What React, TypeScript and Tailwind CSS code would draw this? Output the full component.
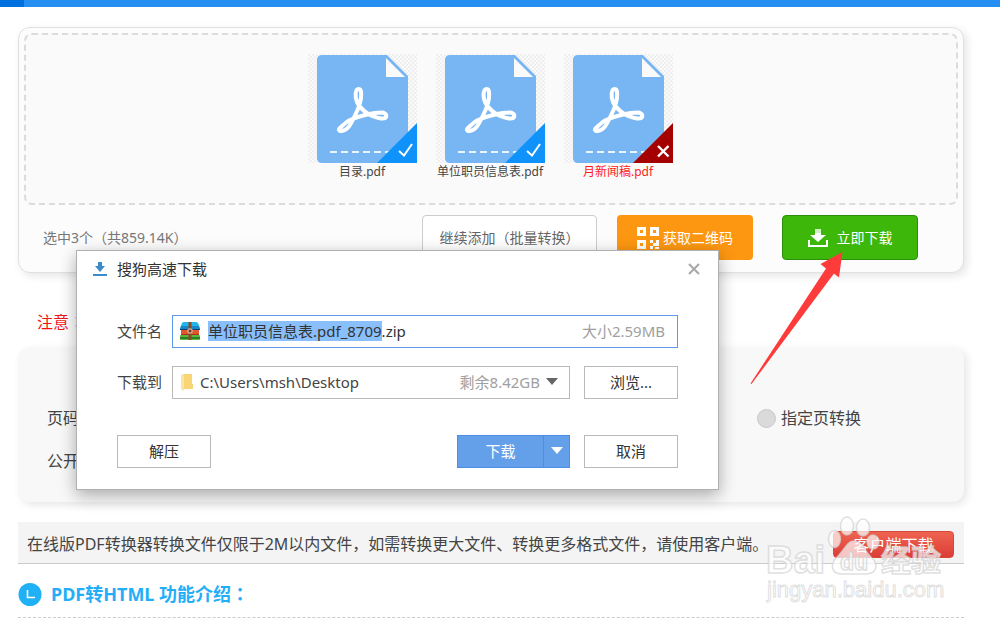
import React, {useEffect, useRef} from "react";

type PdfFile = {
    name: string;
    ok: boolean;
};

const files: PdfFile[] = [
    {name: "目录.pdf", ok: true},
    {name: "单位职员信息表.pdf", ok: true},
    {name: "月新闻稿.pdf", ok: false},
];

const zipBaseName = "单位职员信息表.pdf_8709";

// 居中显示的全角冒号
const Colon = () => <span className="font-['Noto_Sans_CJK_TC',sans-serif]">：</span>;

const PdfIcon: React.FC<{ ok: boolean }> = ({ok}) => (
    <svg viewBox="0 0 109 109" className="block size-[109px]" aria-hidden="true">
        <defs>
            <pattern id="checker" width="4" height="4" patternUnits="userSpaceOnUse">
                <rect width="2" height="2" fill="#efefef"/>
                <rect x="2" y="2" width="2" height="2" fill="#efefef"/>
            </pattern>
        </defs>
        <rect width="109" height="109" fill="url(#checker)"/>
        <path d="M14 1H79L100 22V109H14Q9 109 9 104V6Q9 1 14 1Z" fill="#78b6f3"/>
        <path d="M78 4V23H97Z" fill="#fafafa"/>
        <path
            d="M32 74C28 78 37 79 42 71C46 64 52 53 53 44C53.500 36 52.500 35 50.500 35C47.500 35 46.500 42 49 48C53 56 62 63 73 64.500C80 65 80 59 74 58.500C65 58.500 51 62 42 66C38 68 35 71 32 74Z"
            fill="none"
            stroke="#fff"
            strokeWidth="4"
            strokeLinejoin="round"
        />
        <path d="M22 98H82" stroke="#fff" strokeWidth="2" strokeDasharray="7 4" opacity=".85"/>
        <path d="M109 69V109H69Z" fill={ok ? "#0f93fb" : "#a50000"}/>
        {ok ? (
            <path d="M91 97L96 101.500L104 90" fill="none" stroke="#fff" strokeWidth="2"/>
        ) : (
            <path d="M94 92L104.500 102.500M104.500 92L94 102.500" stroke="#fff" strokeWidth="2.400"/>
        )}
    </svg>
);

const QrIcon = () => (
    <svg viewBox="0 0 22 22" className="size-[22px]" aria-hidden="true">
        <path
            fill="#fff"
            fillRule="evenodd"
            d="M0 0H9V9H0ZM3 3V6H6V3ZM13 0H22V9H13ZM16 3V6H19V3ZM0 13H9V22H0ZM3 16V19H6V16ZM13 13H16V16H13ZM19 13H22V19H16V16H19ZM13 19H16V22H13ZM18 20H22V22H18Z"
        />
    </svg>
);

const TrayDownloadIcon = () => (
    <svg viewBox="0 0 20 18" className="h-[18px] w-5" aria-hidden="true">
        <path d="M7 0H13V4H7Z" fill="#fff" opacity=".75"/>
        <path d="M7 4H13V6H18L10 13L2 6H7Z" fill="#fff"/>
        <path d="M1 11V17H19V11" fill="none" stroke="#fff" strokeWidth="2"/>
    </svg>
);

const ZipIcon = () => (
    <svg viewBox="0 0 20 18" className="h-[18px] w-5 shrink-0" aria-hidden="true">
        <path d="M4 0H16Q18 0 18.500 2L20 7H0L1.500 2Q2 0 4 0Z" fill="#20b6ea"/>
        <path d="M1 4H19L20 7H0Z" fill="#1787c6"/>
        <rect y="7" width="20" height="1" fill="#123f73"/>
        <rect x="1" y="8" width="18" height="5" fill="#e2552f"/>
        <rect x="1" y="12" width="18" height="1" fill="#a83518"/>
        <rect y="13" width="20" height="5" rx="1" fill="#5cb540"/>
        <rect y="15" width="20" height="2" fill="#2f7d25"/>
        <rect x="8.500" width="3" height="18" fill="#8a4b22"/>
        <rect x="8" y="7" width="4" height="4" rx="1" fill="#7a3418" stroke="#e8dcc8"/>
    </svg>
);

const FolderIcon = () => (
    <svg viewBox="0 0 13 18" className="h-[18px] w-[13px] shrink-0" aria-hidden="true">
        <path d="M3 1H12V11H13V16H3Z" fill="#f9d675"/>
        <path d="M1 1L4 3V18L1 16Z" fill="#fbe5a0"/>
    </svg>
);

const DownloadDialog = () => {
    const nameRef = useRef<HTMLInputElement>(null);

    // 默认选中文件名，不含扩展名
    useEffect(() => {
        nameRef.current?.focus();
        nameRef.current?.setSelectionRange(0, zipBaseName.length);
    }, []);

    const plainButton = "h-[33px] w-[94px] border border-[#b9b9b9] bg-white pb-[2px] text-[15px] text-[#333]";

    return (
        <div
            role="dialog"
            aria-labelledby="dialog-title"
            className="absolute top-[250px] left-[76px] w-[643px] border border-[#b0b0b0] bg-white text-[15px] text-[#444] shadow-[0_5px_16px_rgba(0,0,0,0.32)]"
        >
            <div className="flex h-9 items-center gap-[10px] pr-[18px] pl-4">
                <svg viewBox="0 0 14 14" className="size-[14px]" aria-hidden="true">
                    <path d="M5 0H9V4H12L7 10L2 4H5ZM0 12H14V14H0Z" fill="#3c8bcb"/>
                </svg>
                <h2 id="dialog-title" className="flex-1 text-[#333]">搜狗高速下载</h2>
                <button aria-label="关闭">
                    <svg viewBox="0 0 12 12" className="size-3">
                        <path d="M1 1L11 11M11 1L1 11" stroke="#aaa" strokeWidth="2.200"/>
                    </svg>
                </button>
            </div>

            <div className="px-10 pt-7 pb-[21px]">
                <div className="flex items-center">
                    <label htmlFor="file-name" className="w-[55px] pb-[2px]">文件名</label>
                    <div className="flex h-[33px] flex-1 items-center border border-[#5b9bea] pr-3 pb-[2px] pl-[7px]">
                        <ZipIcon/>
                        <input
                            id="file-name"
                            ref={nameRef}
                            defaultValue={`${zipBaseName}.zip`}
                            className="ml-2 h-5 min-w-0 flex-1 leading-5 text-[#333] caret-transparent outline-none selection:bg-[#89bffb] selection:text-[#333]"
                        />
                        <span className="text-[#a0a0a0]">大小2.59MB</span>
                    </div>
                </div>

                <div className="mt-[18px] flex items-center">
                    <label htmlFor="save-path" className="w-[55px] pb-[2px]">下载到</label>
                    <div className="flex h-[33px] flex-1 items-center border border-[#b9b9b9] pr-[11px] pb-[2px] pl-[7px]">
                        <FolderIcon/>
                        <select id="save-path" className="ml-[7px] min-w-0 flex-1 appearance-none bg-transparent outline-none">
                            <option>C:\Users\msh\Desktop</option>
                        </select>
                        <span className="mr-[6px] text-[#a0a0a0]">剩余8.42GB</span>
                        <svg viewBox="0 0 12 7" className="h-[7px] w-3" aria-hidden="true">
                            <path d="M0 0H12L6 7Z" fill="#666"/>
                        </svg>
                    </div>
                    <button className={`ml-[14px] ${plainButton}`}>浏览...</button>
                </div>

                <div className="mt-9 flex">
                    <button className={`mr-auto ${plainButton}`}>解压</button>
                    <button className="h-[33px] w-[87px] border border-[#4a8ee6] bg-[#64a0ea] pb-[2px] text-[15px] text-white">
                        下载
                    </button>
                    <button
                        aria-label="更多下载方式"
                        className="flex h-[33px] w-[26px] items-center justify-center border border-l-0 border-[#4a8ee6] bg-[#64a0ea] pb-[2px]"
                    >
                        <svg viewBox="0 0 12 7" className="h-[7px] w-3">
                            <path d="M0 0H12L6 7Z" fill="#fff"/>
                        </svg>
                    </button>
                    <button className={`ml-[14px] ${plainButton}`}>取消</button>
                </div>
            </div>
        </div>
    );
};

const Arrow = () => (
    <svg viewBox="0 0 94 134" className="pointer-events-none absolute top-[251px] right-[156px] h-[134px] w-[94px]" aria-hidden="true">
        <path d="M92.500 1L70.500 13L76 17.500L.500 132.500L1.500 133L84 22.500L89 26.500Z" fill="#fd3b3b"/>
    </svg>
);

const Watermark = () => (
    <svg
        viewBox="0 0 260 124"
        className="pointer-events-none absolute top-[500px] right-0 h-[124px] w-[260px] font-['Liberation_Sans','Noto_Sans_CJK_SC',sans-serif]"
        aria-hidden="true"
    >
        <g fill="#fff" fillOpacity=".7" stroke="#d2d2d2" strokeOpacity=".7" strokeWidth="1.500">
            <ellipse cx="94.500" cy="39" rx="6" ry="8.500"/>
            <ellipse cx="107" cy="26" rx="6.500" ry="9"/>
            <ellipse cx="123" cy="27.500" rx="6.500" ry="8.500"/>
            <ellipse cx="133" cy="42" rx="6" ry="7"/>
            <path d="M114 41C107 41 105 49 98 56C90 63 90 74 102 74H127C138 73 138 63 131 57C124 50 122 41 114 41Z"/>
            <text x="26" y="73" fontSize="38" fontWeight="700">Bai</text>
            <text x="100" y="70" fontSize="23" fontWeight="700">du</text>
            <text x="141" y="71" fontSize="30" fontWeight="700">经验</text>
            <text x="27" y="97" fontSize="22" strokeWidth="1">jingyan.baidu.com</text>
        </g>
    </svg>
);

const App: React.FC = () => {
    return (
        <div className="relative overflow-hidden bg-white font-['Noto_Sans','Noto_Sans_CJK_SC',sans-serif] text-base leading-6 text-[#444]">
            <div className="flex h-[7px] bg-[#2590f1]">
                <div className="w-6 bg-[#0070de]"/>
            </div>

            <main className="pt-5 pr-9 pl-[18px]">
                <section className="rounded-xl border border-[#e0e0e0] bg-[#fcfcfc] px-[5px] pt-[5px] pb-3 shadow-[3px_3px_8px_rgba(0,0,0,0.1)]">
                    <ul className="flex justify-center gap-[19px] rounded-lg border-2 border-dashed border-[#dcdcdc] bg-[#fafafa] pt-[19px] pr-[2px] pb-[23px]">
                        {files.map((file) => (
                            <li key={file.name} className="w-[109px]">
                                <PdfIcon ok={file.ok}/>
                                <p className={`text-center text-xs leading-[17px] whitespace-nowrap ${file.ok ? "text-[#444]" : "text-[#ff1a1a]"}`}>
                                    {file.name}
                                </p>
                            </li>
                        ))}
                    </ul>

                    <div className="mt-[10px] flex items-center pr-10 pl-[19px] text-sm">
                        <p className="mr-auto text-[#777]">选中3个（共859.14K）</p>
                        <button className="h-[45px] w-[175px] rounded border border-[#ccc] bg-white text-[#666]">
                            继续添加（批量转换）
                        </button>
                        <button className="ml-5 flex h-[45px] w-[136px] items-center justify-center gap-1 rounded bg-[#fd9711] text-white">
                            <QrIcon/>
                            获取二维码
                        </button>
                        <button className="ml-[29px] flex h-[45px] w-[136px] items-center justify-center gap-[9px] rounded border border-[#2d8e0c] bg-[#3cb70a] text-white">
                            <TrayDownloadIcon/>
                            立即下载
                        </button>
                    </div>
                </section>

                <p className="mt-9 pl-[19px] text-[#f01414]">注意<Colon/></p>

                <section className="mt-[13px] rounded-xl bg-[#f8f8f8] pt-[59px] pr-[103px] pb-[29px] pl-[29px] shadow-[3px_3px_8px_rgba(0,0,0,0.1)]">
                    <div className="flex justify-between">
                        <span>页码</span>
                        <label className="flex items-center gap-[5px]">
                            <input type="radio" name="pages" className="size-[19px] appearance-none rounded-full border border-[#c8c8c8] bg-[#dadada]"/>
                            指定页转换
                        </label>
                    </div>
                    <p className="mt-[19px]">公开</p>
                </section>

                <div className="mt-5 flex h-[42px] items-center justify-between border-b border-[#ccc] bg-[#f4f4f4] pt-[2px] pr-[10px] pl-[9px]">
                    <p className="whitespace-nowrap">在线版PDF转换器转换文件仅限于2M以内文件，如需转换更大文件、转换更多格式文件，请使用客户端。</p>
                    <button className="mt-[2px] h-[27px] w-[121px] shrink-0 rounded-sm border border-[#d8483a] bg-linear-to-b from-[#ee6350] to-[#dc3c37] leading-6 text-white">
                        客户端下载
                    </button>
                </div>

                <div className="mt-[15px] flex items-center gap-[9px] border-b border-dashed border-[#ccc] pb-[9px]">
                    <svg viewBox="0 0 24 24" className="size-6" aria-hidden="true">
                        <circle cx="12" cy="12.500" r="11.500" fill="#1fb0f6"/>
                        <path d="M9.500 8V15.500H17" fill="none" stroke="#fff" strokeWidth="1.600"/>
                    </svg>
                    <h1 className="text-lg font-bold text-[#23aef7]">PDF转HTML 功能介绍<Colon/></h1>
                </div>
            </main>

            <DownloadDialog/>
            <Arrow/>
            <Watermark/>
        </div>
    );
};

export default App;
